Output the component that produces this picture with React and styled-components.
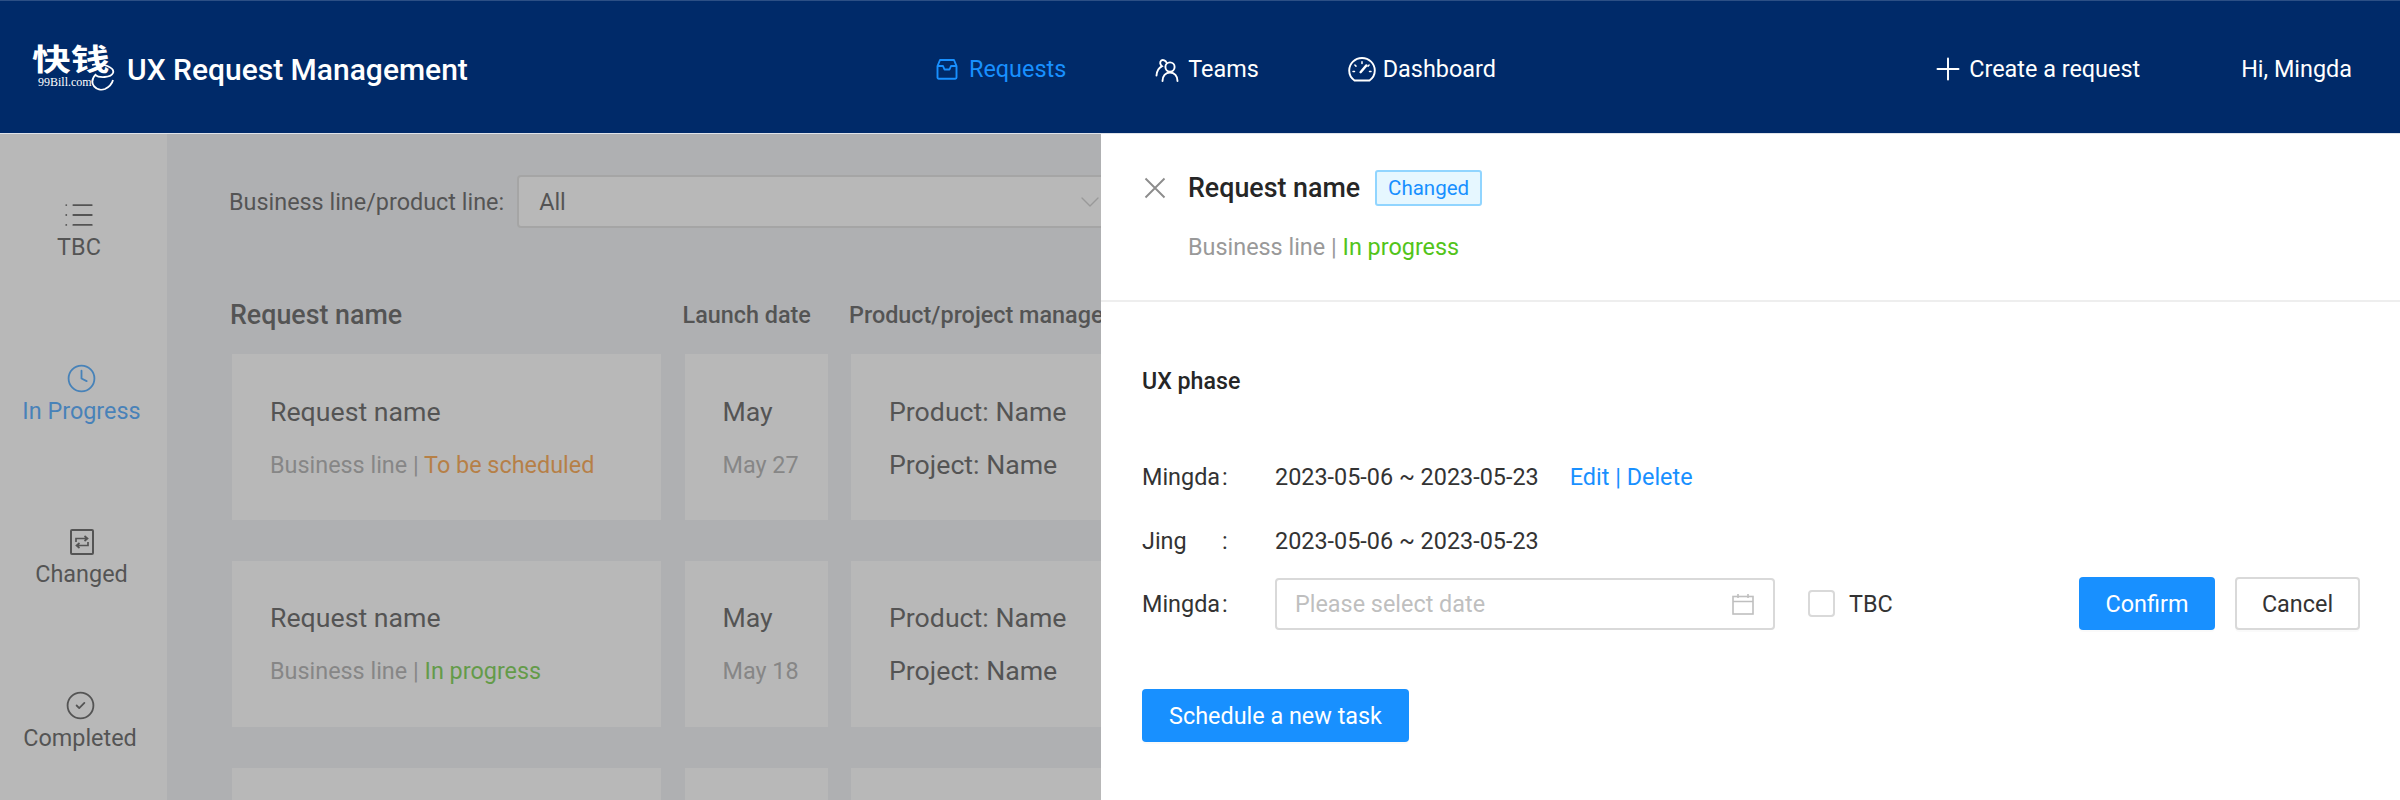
import React from 'react';
import styled, { createGlobalStyle } from 'styled-components';
import { Plus, ChevronDown, List, Clock, CircleCheck } from 'lucide-react';

const GlobalStyle = createGlobalStyle`
  html, body {
    margin: 0;
    padding: 0;
    height: 800px;
    overflow: hidden;
    background: #fff;
    font-family: Roboto, "Noto Sans CJK SC", sans-serif;
    color: #333;
  }
  * { box-sizing: border-box; }
`;

const Page = styled.div`
  width: 2400px;
  height: 800px;
  display: flex;
  flex-direction: column;
`;

/* header */
const Header = styled.header`
  flex: 0 0 134px;
  display: flex;
  align-items: center;
  padding: 4px 48px 0 31px;
  background: #002a69;
  border-top: 1px solid #2c4f85;
  border-bottom: 1px solid #dfe3ea;
`;

const Brand = styled.div`
  flex: 0 0 905px;
  display: flex;
  align-items: center;
  gap: 12px;
`;

const LogoMark = styled.svg`
  margin-bottom: 12px;
`;

const BrandName = styled.span`
  font-size: 30px;
  font-weight: 500;
  color: #fff;
`;

const Nav = styled.nav`
  display: flex;
  align-items: center;
  gap: 89px;
`;

const NavItem = styled.a`
  display: flex;
  align-items: center;
  gap: ${(p) => p.$gap || 11}px;
  font-size: 23.4px;
  color: ${(p) => (p.$active ? '#1890ff' : '#fff')};
`;

const HeaderRight = styled.div`
  margin-left: auto;
  display: flex;
  align-items: center;
  gap: 101px;
  font-size: 23.4px;
  color: #fff;
`;

/* page behind the drawer */
const Body = styled.div`
  position: relative;
  flex: 1;
  display: flex;
  overflow: hidden;
  background: #edeff3;
`;

const Sidebar = styled.aside`
  flex: 0 0 167px;
  padding-top: 67px;
  background: #fff;
`;

const SideItem = styled.div`
  height: 163.6px;
  display: flex;
  flex-direction: column;
  align-items: center;
  gap: 2px;
  padding-right: ${(p) => p.$inset}px;
  color: ${(p) => (p.$active ? '#1890ff' : '#333')};
`;

const SideIcon = styled.span`
  height: 28px;
  display: flex;
  align-items: center;
  justify-content: center;
`;

const SideLabel = styled.span`
  font-size: 23.4px;
  line-height: 32px;
`;

const Content = styled.main`
  flex: 1;
  min-width: 0;
  padding: 41px 0 0 64px;
`;

const Filter = styled.div`
  display: flex;
  align-items: center;
  gap: 13px;
  margin-left: -2px;
  font-size: 23.4px;
`;

const Select = styled.div`
  width: 595px;
  height: 53px;
  display: flex;
  align-items: center;
  justify-content: space-between;
  padding: 0 4px 0 20px;
  background: #fff;
  border: 2px solid #d9d9d9;
  border-radius: 4px;
  svg { color: #bfbfbf; }
`;

const Table = styled.div`
  display: grid;
  grid-template-columns: 429px 143px 1100px;
  column-gap: 23.5px;
  row-gap: 40.4px;
  margin: 71px 0 0 1px;
`;

const HeadRow = styled.div`
  grid-column: 1 / -1;
  display: grid;
  grid-template-columns: 429px 143px 1100px;
  column-gap: 23.5px;
  height: 32px;
  margin: 0 0 -17.4px -2px;
`;

const HeadCell = styled.div`
  font-size: ${(p) => (p.$large ? 26.8 : 23.4)}px;
  font-weight: 500;
  line-height: 32px;
  white-space: nowrap;
`;

const Card = styled.div`
  height: 166.4px;
  display: flex;
  flex-direction: column;
  padding: 40.5px 0 0 38px;
  background: #fff;
`;

const CardTitle = styled.div`
  font-size: 26.7px;
  line-height: 34px;
  color: #333;
`;

const CardSub = styled.div`
  margin-top: 19px;
  font-size: ${(p) => (p.$strong ? 26.7 : 23.4)}px;
  line-height: 34px;
  color: ${(p) => (p.$strong ? '#333' : '#999')};
`;

const Status = styled.span`
  color: ${(p) => p.$color};
`;

const Mask = styled.div`
  position: absolute;
  inset: 0;
  z-index: 1;
  background: rgba(116, 116, 116, 0.515);
`;

/* drawer */
const Drawer = styled.section`
  position: absolute;
  top: 0;
  right: 0;
  bottom: 0;
  z-index: 2;
  width: 1299px;
  background: #fff;
`;

const DrawerHead = styled.div`
  height: 168px;
  padding: 36px 0 0 43px;
  border-bottom: 2px solid #eee;
`;

const TitleRow = styled.div`
  display: flex;
  align-items: center;
  height: 36px;
  color: #8c8c8c;
`;

const DrawerTitle = styled.h2`
  margin: 0 15px 0 22px;
  font-size: 26.8px;
  font-weight: 500;
  color: #262626;
`;

const Tag = styled.span`
  height: 36px;
  padding: 0 11px;
  display: flex;
  align-items: center;
  font-size: 20.5px;
  color: #1890ff;
  background: #e6f7ff;
  border: 2px solid #91d5ff;
  border-radius: 3px;
`;

const DrawerSub = styled.div`
  margin: 24px 0 0 44px;
  font-size: 23.4px;
  line-height: 34px;
  color: #999;
`;

const DrawerBody = styled.div`
  padding: 63px 40px 0 41px;
`;

const Phase = styled.h3`
  margin: 0 0 64px;
  font-size: 23.2px;
  font-weight: 500;
  line-height: 32px;
  color: #262626;
`;

const Row = styled.div`
  display: flex;
  align-items: center;
  height: ${(p) => p.$height || 32}px;
  margin-bottom: ${(p) => p.$after || 0}px;
  font-size: 23.4px;
  color: #333;
`;

const Who = styled.span`
  flex: 0 0 133px;
  display: flex;
`;

const WhoName = styled.span`
  width: 80px;
`;

const Links = styled.a`
  margin-left: 31px;
  color: #1890ff;
`;

const DateField = styled.div`
  width: 500px;
  height: 52px;
  display: flex;
  align-items: center;
  justify-content: space-between;
  padding: 0 19px 0 18px;
  color: #bfbfbf;
  border: 2px solid #d9d9d9;
  border-radius: 4px;
`;

const Check = styled.span`
  width: 27px;
  height: 27px;
  margin: 0 14px 0 33px;
  border: 2px solid #d9d9d9;
  border-radius: 4px;
`;

const Button = styled.button`
  height: 53px;
  width: ${(p) => p.$width}px;
  margin-left: ${(p) => p.$left || 0};
  padding: 0;
  font: inherit;
  font-size: 23.4px;
  color: ${(p) => (p.$primary ? '#fff' : '#333')};
  background: ${(p) => (p.$primary ? '#1890ff' : '#fff')};
  border: ${(p) => (p.$primary ? 'none' : '2px solid #d9d9d9')};
  border-radius: 4px;
  box-shadow: 0 2px 0 rgba(0, 0, 0, 0.02);
`;

const ButtonGap = styled.span`
  width: 20px;
`;

/* drawings */
const Logo = () => (
  <LogoMark width="84" height="58" viewBox="0 -8 84 58">
    <text
      transform="translate(1 28) scale(1.08 .82)"
      fontSize="36"
      fontWeight="700"
      fill="#fff"
      fontFamily="'Noto Sans CJK SC', sans-serif"
    >
      快钱
    </text>
    <text x="7" y="44" fontSize="12" fill="#fff" fontFamily="'Liberation Serif', serif">99Bill.com</text>
    <path
      d="M61 23C72 20 84 26 82 31C80 36 68 36 64 33M65 32C56 42 66 50 74 47C78 45 81 42 82 38"
      fill="none"
      stroke="#fff"
      strokeWidth="1.8"
    />
  </LogoMark>
);

const InboxIcon = () => (
  <svg width="22" height="22" viewBox="0 0 22 22" fill="none" stroke="currentColor" strokeWidth="1.9" strokeLinejoin="round">
    <path d="M4 2H18L20.5 8V19.5A1.2 1.2 0 0 1 19.3 20.7H2.7A1.2 1.2 0 0 1 1.5 19.5V8Z" />
    <path d="M1.5 8H7L8.5 11.5H13.5L15 8H20.5" />
  </svg>
);

const TeamIcon = () => (
  <svg width="25" height="25" viewBox="0 0 25 25" fill="none" stroke="currentColor" strokeWidth="1.9" strokeLinecap="round">
    <circle cx="15" cy="10" r="4.6" />
    <path d="M7.5 24C7.5 19 10.5 15.5 15 15.5C19.5 15.5 22.5 19 22.5 24" />
    <path d="M11.5 5.5C10.7 3.5 8 2.2 6.3 3.5C4.5 5 5 7.5 7 9.2C3.6 11 1.8 14.5 1.5 18.5" />
  </svg>
);

const GaugeIcon = () => (
  <svg width="28" height="25" viewBox="0 0 28 25" fill="none" stroke="currentColor" strokeWidth="1.9" strokeLinecap="round">
    <path d="M6.5 23.5C3.2 21.2 1.2 17.6 1.2 13.6C1.2 6.6 6.9 1 14 1C21.1 1 26.8 6.6 26.8 13.6C26.8 17.6 24.8 21.2 21.5 23.5Z" />
    <path d="M12.6 15.2L18.4 8.4" strokeWidth="2.4" />
    <path d="M14 4.8V6.4M6.9 8L8 9.1M21.1 8L20 9.1M5 14.4H6.5M21.5 14.4H23" strokeWidth="1.5" />
  </svg>
);

const ChangeIcon = () => (
  <svg width="24" height="26" viewBox="0 0 24 26" fill="none" stroke="currentColor" strokeWidth="1.7">
    <rect x="1" y="1" width="22" height="24" rx="1" strokeWidth="2" />
    <path d="M6 13V9.5H17M14.5 7L17.5 9.5L14.5 12" />
    <path d="M18 13V16.5H7M9.5 14L6.5 16.5L9.5 19" />
  </svg>
);

const CalendarIcon = () => (
  <svg width="22" height="22" viewBox="0 0 22 22" fill="none" stroke="#bfbfbf" strokeWidth="1.6">
    <rect x="1" y="3.5" width="20" height="17.5" />
    <path d="M1 8.5H21M6 1V5M16 1V5" />
  </svg>
);

const CloseIcon = () => (
  <svg width="22" height="22" viewBox="0 0 22 22" fill="none" stroke="currentColor" strokeWidth="1.9">
    <path d="M1.5 1.5L20.5 20.5M20.5 1.5L1.5 20.5" />
  </svg>
);

const sideItems = [
  { label: 'TBC', inset: 9, icon: <List size={34} strokeWidth={1.3} /> },
  { label: 'In Progress', inset: 4, icon: <Clock size={31} strokeWidth={1.4} />, active: true },
  { label: 'Changed', inset: 4, icon: <ChangeIcon /> },
  { label: 'Completed', inset: 7, icon: <CircleCheck size={31} strokeWidth={1.4} /> },
];

const requests = [
  { status: 'To be scheduled', color: '#fa8c16', date: 'May 27' },
  { status: 'In progress', color: '#52c41a', date: 'May 18' },
];

export default function App() {
  return (
    <Page>
      <GlobalStyle />
      <Header>
        <Brand>
          <Logo />
          <BrandName>UX Request Management</BrandName>
        </Brand>
        <Nav>
          <NavItem $active><InboxIcon />Requests</NavItem>
          <NavItem $gap={8}><TeamIcon />Teams</NavItem>
          <NavItem $gap={7}><GaugeIcon />Dashboard</NavItem>
        </Nav>
        <HeaderRight>
          <NavItem $gap={3}><Plus size={36} strokeWidth={1.3} />Create a request</NavItem>
          <span>Hi, Mingda</span>
        </HeaderRight>
      </Header>
      <Body>
        <Sidebar>
          {sideItems.map((item) => (
            <SideItem key={item.label} $active={item.active} $inset={item.inset}>
              <SideIcon>{item.icon}</SideIcon>
              <SideLabel>{item.label}</SideLabel>
            </SideItem>
          ))}
        </Sidebar>
        <Content>
          <Filter>
            Business line/product line:
            <Select>All<ChevronDown size={32} strokeWidth={1} /></Select>
          </Filter>
          <Table>
            <HeadRow>
              <HeadCell $large>Request name</HeadCell>
              <HeadCell>Launch date</HeadCell>
              <HeadCell>Product/project manager</HeadCell>
            </HeadRow>
            {requests.map((r) => (
              <React.Fragment key={r.date}>
                <Card>
                  <CardTitle>Request name</CardTitle>
                  <CardSub>Business line | <Status $color={r.color}>{r.status}</Status></CardSub>
                </Card>
                <Card>
                  <CardTitle>May</CardTitle>
                  <CardSub>{r.date}</CardSub>
                </Card>
                <Card>
                  <CardTitle>Product: Name</CardTitle>
                  <CardSub $strong>Project: Name</CardSub>
                </Card>
              </React.Fragment>
            ))}
            <Card />
            <Card />
            <Card />
          </Table>
        </Content>
        <Mask />
        <Drawer>
          <DrawerHead>
            <TitleRow>
              <CloseIcon />
              <DrawerTitle>Request name</DrawerTitle>
              <Tag>Changed</Tag>
            </TitleRow>
            <DrawerSub>Business line | <Status $color="#52c41a">In progress</Status></DrawerSub>
          </DrawerHead>
          <DrawerBody>
            <Phase>UX phase</Phase>
            <Row $after={32}>
              <Who><WhoName>Mingda</WhoName>:</Who>
              2023-05-06 ~ 2023-05-23
              <Links>Edit | Delete</Links>
            </Row>
            <Row $after={20}>
              <Who><WhoName>Jing</WhoName>:</Who>
              2023-05-06 ~ 2023-05-23
            </Row>
            <Row $height={53} $after={59}>
              <Who><WhoName>Mingda</WhoName>:</Who>
              <DateField>Please select date<CalendarIcon /></DateField>
              <Check />
              TBC
              <Button $primary $width={136} $left="auto">Confirm</Button>
              <ButtonGap />
              <Button $width={125}>Cancel</Button>
            </Row>
            <Button $primary $width={267}>Schedule a new task</Button>
          </DrawerBody>
        </Drawer>
      </Body>
    </Page>
  );
}
